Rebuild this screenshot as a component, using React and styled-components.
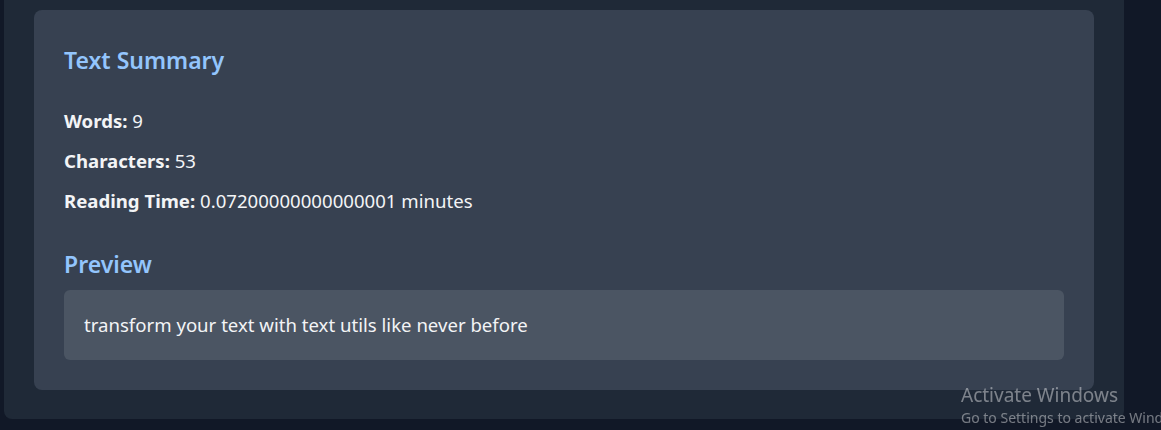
import React from 'react';
import styled, { createGlobalStyle } from 'styled-components';

const GlobalStyle = createGlobalStyle`
  html, body {
    margin: 0;
    padding: 0;
    background: #111827;
    overflow: hidden;
  }
  body {
    font-family: "Noto Sans", "Open Sans", Arial, sans-serif;
    color: #f3f4f6;
  }
`;

const Page = styled.div`
  height: 430px;
  padding-left: 4px;
  width: 1120px;
`;

const Panel = styled.div`
  background: #1f2937;
  border-radius: 0 0 8px 8px;
  padding: 10px 30px 29px;
`;

const Card = styled.section`
  background: #374151;
  border-radius: 8px;
  padding: 32px 30px 30px;
`;

const Heading = styled.h2`
  margin: 0 0 ${p => p.$gap}px;
  font-size: 23px;
  line-height: 36px;
  font-weight: 600;
  color: #93c5fd;
`;

const Stat = styled.p`
  margin: 0 0 12px;
  font-size: 18.6px;
  line-height: 28px;

  strong {
    font-weight: 700;
  }
`;

const Stats = styled.div`
  margin-bottom: 31px;
`;

const PreviewBox = styled.div`
  background: #4b5563;
  border-radius: 6px;
  padding: 20px;
  font-size: 18.6px;
  line-height: 30px;
`;

const Watermark = styled.div`
  position: fixed;
  left: 961px;
  top: 382px;
  color: rgba(255, 255, 255, 0.42);
  white-space: nowrap;
  pointer-events: none;
`;

const WatermarkTitle = styled.div`
  font-size: 19px;
  line-height: 26px;
`;

const WatermarkSub = styled.div`
  font-size: 14px;
  line-height: 20px;
`;

const stats = [
  { label: 'Words:', value: '9' },
  { label: 'Characters:', value: '53' },
  { label: 'Reading Time:', value: '0.07200000000000001 minutes' },
];

export default function App() {
  return (
    <>
      <GlobalStyle />
      <Page>
        <Panel>
          <Card>
            <Heading $gap={29}>Text Summary</Heading>
            <Stats>
              {stats.map(s => (
                <Stat key={s.label}>
                  <strong>{s.label}</strong> {s.value}
                </Stat>
              ))}
            </Stats>
            <Heading $gap={8}>Preview</Heading>
            <PreviewBox>transform your text with text utils like never before</PreviewBox>
          </Card>
        </Panel>
      </Page>
      <Watermark>
        <WatermarkTitle>Activate Windows</WatermarkTitle>
        <WatermarkSub>Go to Settings to activate Windows.</WatermarkSub>
      </Watermark>
    </>
  );
}
